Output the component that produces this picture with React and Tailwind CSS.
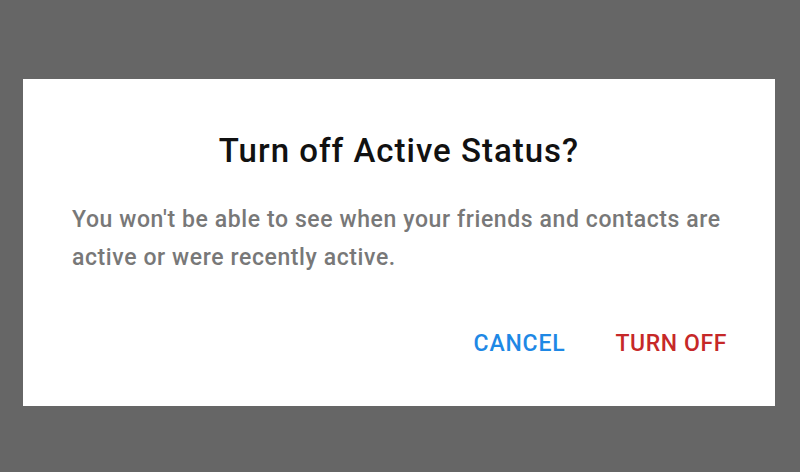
import React from 'react';

export default function App() {
  return (
    <div
      className="w-[800px] h-[472px] bg-[#666666] pt-[79px] pl-[23px]"
      style={{ fontFamily: 'Roboto, "Noto Sans", sans-serif' }}
    >
      <div className="w-[752px] h-[327px] bg-white flex flex-col">
        <h2 className="mt-[52px] text-center text-[33px] leading-[40px] font-medium tracking-[1px] text-[#111111]">
          Turn off Active Status?
        </h2>
        <p className="mt-[30px] pl-[49px] pr-[20px] text-[23px] leading-[38px] font-medium tracking-[0.6px] text-[#787878]">
          You won't be able to see when your friends and contacts are active or were recently active.
        </p>
        <div className="mt-[52px] flex justify-end gap-[50px] pr-[48px]">
          <button className="text-[23px] leading-[30px] font-medium tracking-[0.8px] text-[#1e88e5]">CANCEL</button>
          <button className="text-[23px] leading-[30px] font-medium tracking-[0.6px] text-[#c62828]">TURN OFF</button>
        </div>
      </div>
    </div>
  );
}
